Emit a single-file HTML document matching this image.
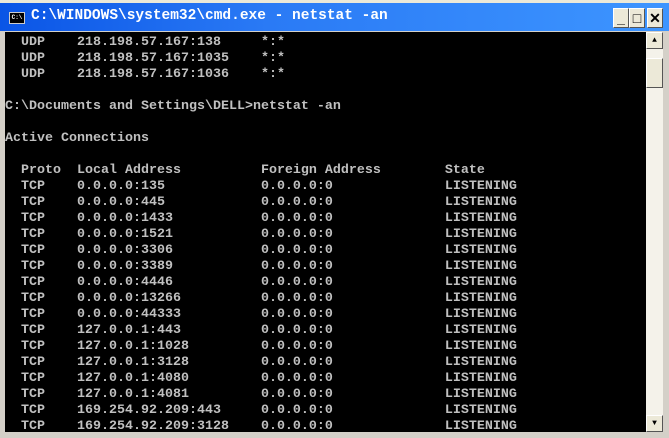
<html><head><style>
body{margin:0;width:669px;height:438px;background:#ece9d8;position:relative;overflow:hidden;font-family:"Liberation Mono",monospace}
.frame{position:absolute;left:0;top:0;width:669px;height:438px;background:#d4d0c8;border-top:3px solid #ece9d8;box-sizing:border-box}
.title{position:absolute;left:0;top:3px;width:669px;height:28px;background:linear-gradient(90deg,#0a55e6,#2a7af5 40%,#3d95ff);}
.title .t{position:absolute;left:31px;top:5px;color:#fff;font-weight:bold;font-size:14.5px;white-space:pre}
.ico{position:absolute;left:9px;top:9px;width:16px;height:12px;background:#000;border:1px solid #ccc;color:#fff;font-size:6px;line-height:10px;text-align:center;font-weight:bold;box-sizing:border-box}
.btn{position:absolute;top:5px;width:16px;height:20px;background:#ece9d8;border:1px solid #fff;border-right-color:#555;border-bottom-color:#555;box-sizing:border-box;font-weight:bold;text-align:center;font-size:14px;line-height:18px;color:#000;font-family:"Liberation Sans",sans-serif}
.con{position:absolute;left:5px;top:32px;width:641px;height:400px;background:#000;color:#c0c0c0;font-weight:bold;font-size:13.33px;line-height:16px;white-space:pre;padding-top:3px;box-sizing:border-box;overflow:hidden}
.sb{position:absolute;left:646px;top:32px;width:17px;height:400px;background:#f4f2ea}
.sbb{position:absolute;left:0;width:17px;height:17px;background:#ece9d8;border:1px solid #fff;border-right-color:#555;border-bottom-color:#555;box-sizing:border-box;font-size:8px;text-align:center;line-height:15px}
</style></head><body>
<div class="frame"></div>
<div class="title"><div class="ico">C:\</div><div class="t">C:\WINDOWS\system32\cmd.exe - netstat -an</div>
<div class="btn" style="left:613px">_</div><div class="btn" style="left:629px">□</div><div class="btn" style="left:647px">✕</div></div>
<div class="con">  UDP    218.198.57.167:138     *:*
  UDP    218.198.57.167:1035    *:*
  UDP    218.198.57.167:1036    *:*

C:\Documents and Settings\DELL>netstat -an

Active Connections

  Proto  Local Address          Foreign Address        State
  TCP    0.0.0.0:135            0.0.0.0:0              LISTENING
  TCP    0.0.0.0:445            0.0.0.0:0              LISTENING
  TCP    0.0.0.0:1433           0.0.0.0:0              LISTENING
  TCP    0.0.0.0:1521           0.0.0.0:0              LISTENING
  TCP    0.0.0.0:3306           0.0.0.0:0              LISTENING
  TCP    0.0.0.0:3389           0.0.0.0:0              LISTENING
  TCP    0.0.0.0:4446           0.0.0.0:0              LISTENING
  TCP    0.0.0.0:13266          0.0.0.0:0              LISTENING
  TCP    0.0.0.0:44333          0.0.0.0:0              LISTENING
  TCP    127.0.0.1:443          0.0.0.0:0              LISTENING
  TCP    127.0.0.1:1028         0.0.0.0:0              LISTENING
  TCP    127.0.0.1:3128         0.0.0.0:0              LISTENING
  TCP    127.0.0.1:4080         0.0.0.0:0              LISTENING
  TCP    127.0.0.1:4081         0.0.0.0:0              LISTENING
  TCP    169.254.92.209:443     0.0.0.0:0              LISTENING
  TCP    169.254.92.209:3128    0.0.0.0:0              LISTENING</div>
<div class="sb"><div class="sbb" style="top:0">▲</div><div class="sbb" style="top:26px;height:30px"></div><div class="sbb" style="top:383px">▼</div></div>
</body></html>
